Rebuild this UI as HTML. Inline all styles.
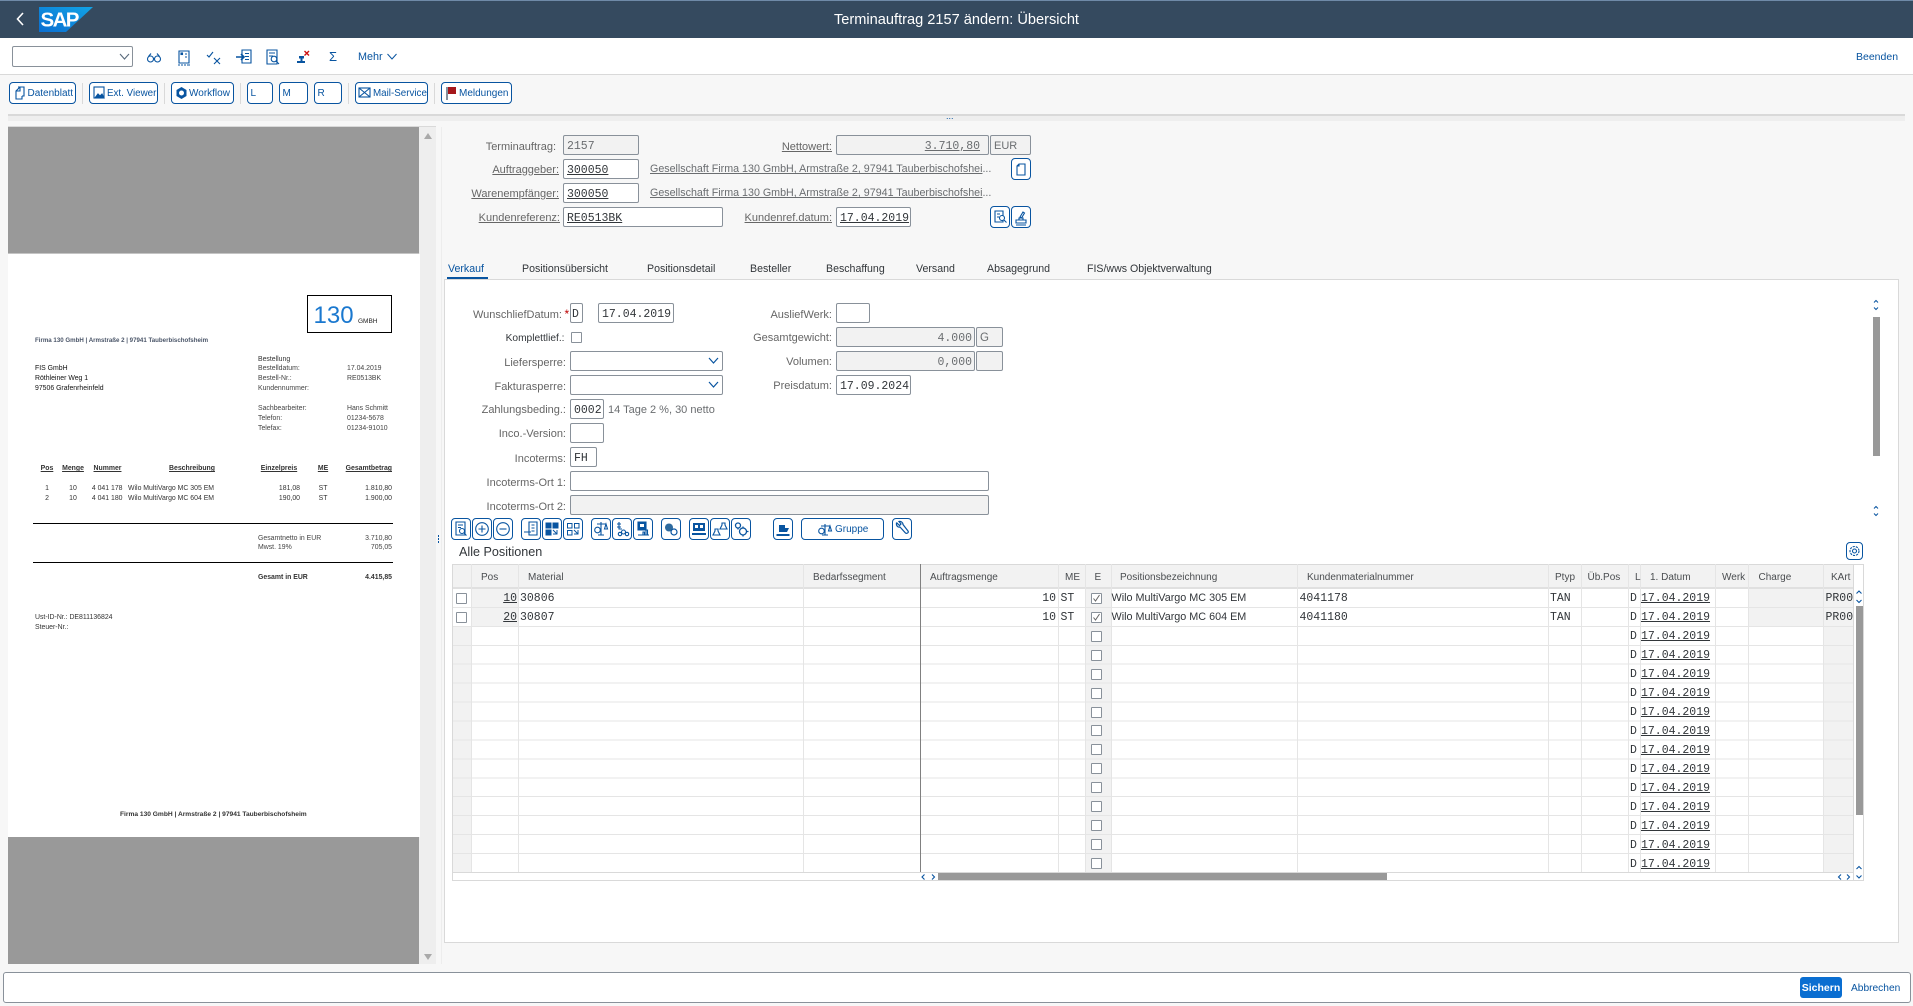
<!DOCTYPE html>
<html lang="de"><head><meta charset="utf-8"><title>Terminauftrag 2157 ändern: Übersicht</title>
<style>
html,body{margin:0;padding:0;width:1913px;height:1006px;overflow:hidden;background:#f7f7f7;font-family:"Liberation Sans",sans-serif;font-size:11px;color:#32363a}
div,span,svg{position:absolute;box-sizing:border-box}
u span,u{position:static}
.t{white-space:nowrap}
.b{border:1px solid #0854a0;border-radius:4px;background:#fff;height:22px;color:#0854a0;font-size:10px;line-height:22px;white-space:nowrap}
.s{width:1px;background:#d9d9d9;top:83px;height:21px}
.l{white-space:nowrap;text-align:right;color:#666;font-size:11px;line-height:23px;height:20px}
.l u{color:#666}
.i{border:1px solid #89919a;border-radius:2px;background:#fff;height:20px;font-family:"Liberation Mono",monospace;font-size:11.5px;line-height:21px;padding:0 2px 0 3px;color:#32363a;white-space:nowrap}
.g{background:#f2f2f2;color:#6a6d70}
.d{white-space:nowrap;font-size:6.9px;line-height:8px;color:#333;margin-top:1px}
.db{font-weight:bold}
.r{text-align:right}
.c{text-align:center}
.hd{white-space:nowrap;font-size:10px;line-height:27px;top:564px;color:#4a4d50}
.m{font-family:"Liberation Mono",monospace;font-size:11.5px;line-height:22px;white-space:nowrap;color:#32363a}
.v{width:1px;top:564px;height:308px;background:#e5e5e5}
.cb{width:11px;height:11px;border:1px solid #89919a;border-radius:1px;background:#fff}
svg{overflow:visible}
svg *{position:static}
.ic{fill:none;stroke:#0854a0;stroke-width:1.1}
.tab{white-space:nowrap;top:258.5px;line-height:20px;font-size:10.6px;color:#32363a}
</style></head><body>

<!-- Header -->
<div style="left:0;top:0;width:1913px;height:38px;background:#354a5f"></div>
<div style="left:0;top:0;width:1913px;height:1px;background:#6f8aa8"></div>
<svg style="left:0;top:0" width="100" height="38">
<polyline points="23,13 17.5,19 23,25" fill="none" stroke="#fff" stroke-width="1.6"/>
<defs><linearGradient id="sg" x1="0" y1="1" x2="1" y2="0"><stop offset="0" stop-color="#0a6ed1"/><stop offset="1" stop-color="#12a4e6"/></linearGradient></defs>
<polygon points="39,7 93,7 66,32 39,32" fill="url(#sg)"/>
<text x="40.5" y="26.5" font-family="Liberation Sans" font-weight="bold" font-size="20.5" letter-spacing="-1.6" fill="#fff">SAP</text>
</svg>
<div class="t" style="left:0;width:1913px;top:10px;line-height:20px;text-align:center;color:#fff;font-size:14.6px">Terminauftrag 2157 ändern: Übersicht</div>

<!-- Toolbar -->
<div style="left:0;top:38px;width:1913px;height:37px;background:#fff;border-bottom:1px solid #d9d9d9"></div>
<div style="left:12px;top:46px;width:121px;height:21px;border:1px solid #89919a;border-radius:2px;background:#fff"></div>
<svg style="left:118px;top:52px" width="14" height="10"><polyline points="2,2 6.5,7 11,2" fill="none" stroke="#5a6b7c" stroke-width="1.1"/></svg>

<svg class="ic" style="left:145px;top:48px" width="18" height="18"><circle cx="5.5" cy="11" r="3"/><circle cx="12.5" cy="11" r="3"/><path d="M8.5 10.500h1M3.500 8.500L6 5.500M14.500 8.500L12 5.500"/></svg>
<svg class="ic" style="left:175px;top:48px" width="18" height="18"><path d="M4 3h10v12H4zM10 6h2M10 9h2M7 6v0"/><path d="M3 17h2M6 17h2M9 17h2M12 17h3"/><rect x="6" y="5" width="1.500" height="1.500" fill="#0854a0"/></svg>
<svg class="ic" style="left:205px;top:48px" width="18" height="18" stroke-width="1.4"><path d="M2 7l2 2 4-5M9 10l6 6M15 10l-6 6"/></svg>
<svg class="ic" style="left:235px;top:48px" width="18" height="18"><path d="M7 2h9v13H7zM10 5.500h4M10 8.500h4M10 11.500h4" /><path d="M1 9h8M6 6l3 3-3 3" stroke-width="1.600"/></svg>
<svg class="ic" style="left:264px;top:48px" width="18" height="18"><path d="M3 2h10v14H3zM5 5h6M5 8h4"/><circle cx="10" cy="11" r="2.800"/><path d="M12 13l3 3"/></svg>
<svg style="left:294px;top:48px" width="20" height="18"><path d="M3 15h8v-2H8.500v-2.500H10V8H5v2.500h1.500V13H3z" fill="#0854a0"/><path d="M10.500 3l4.500 4.500M15 3l-4.500 4.500" stroke="#c11" stroke-width="1.400" fill="none"/></svg>
<div class="t" style="left:329px;top:48px;line-height:18px;color:#0854a0;font-size:13px">Σ</div>
<div class="t" style="left:358px;top:47px;line-height:20px;color:#0854a0;font-size:10.8px">Mehr</div>
<svg style="left:386px;top:52px" width="12" height="10"><polyline points="1.500,2 6,7 10.500,2" fill="none" stroke="#0854a0" stroke-width="1"/></svg>
<div class="t" style="left:1856px;top:46.500px;line-height:20px;color:#0854a0;font-size:10.5px">Beenden</div>

<!-- Button bar -->
<div class="b" style="left:9px;top:82px;width:67px;padding-left:17.500px">Datenblatt
<svg class="ic" style="left:3px;top:2px" width="13" height="16" stroke-width="1.300"><path d="M5 2h6v9H9M7 2L3 6v8h6v-3M3 6h4V2"/></svg></div>
<div class="s" style="left:82px"></div>
<div class="b" style="left:89px;top:82px;width:69px;padding-left:17px;font-size:9.800px">Ext. Viewer
<svg class="ic" style="left:3px;top:3px" width="13" height="14"><rect x="1" y="1" width="10" height="11"/><path d="M2 12l3-4 2 2 2-2 2 4z" fill="#0854a0"/></svg></div>
<div class="s" style="left:164px"></div>
<div class="b" style="left:171px;top:82px;width:63px;padding-left:17px">Workflow
<svg style="left:3px;top:3px" width="13" height="14"><path d="M6.500 1l5 3v6l-5 3-5-3V4z" fill="#0854a0"/><circle cx="6.500" cy="7" r="2.500" fill="#fff"/></svg></div>
<div class="s" style="left:240px"></div>
<div class="b" style="left:247px;top:82px;width:26px;padding-left:2.500px">L</div>
<div class="b" style="left:279px;top:82px;width:29px;padding-left:2.500px">M</div>
<div class="b" style="left:314px;top:82px;width:28px;padding-left:2.500px">R</div>
<div class="s" style="left:348px"></div>
<div class="b" style="left:355px;top:82px;width:73px;padding-left:17px;font-size:9.800px">Mail-Service
<svg class="ic" style="left:2px;top:4px" width="14" height="12"><rect x="1" y="1" width="11" height="9"/><path d="M1 1l11 9M12 1L1 10"/></svg></div>
<div class="s" style="left:434px"></div>
<div class="b" style="left:441px;top:82px;width:71px;padding-left:17px">Meldungen
<svg style="left:3px;top:3px" width="12" height="16"><path d="M2 1v13" stroke="#5a6b7c" stroke-width="1.500"/><rect x="3" y="1" width="8" height="7" fill="#a5171b"/></svg></div>

<!-- Splitter -->
<div style="left:8px;top:114px;width:1897px;height:2px;background:#d9d9d9"></div>
<div style="left:8px;top:116px;width:1897px;height:5px;background:#eeeeee"></div>
<div class="t" style="left:946px;top:112px;line-height:8px;font-size:9px;color:#0854a0;letter-spacing:0">...</div>

<!-- Left document pane -->
<div style="left:8px;top:126px;width:428px;height:838px;background:#eeeeee;border-top:1px solid #d9d9d9"></div>
<div style="left:8px;top:127px;width:411px;height:127px;background:#999;border-bottom:1px solid #c4c4c4"></div>
<div style="left:8px;top:254px;width:412px;height:583px;background:#fff"></div>
<div style="left:8px;top:837px;width:411px;height:127px;background:#999"></div>
<svg style="left:422px;top:131px" width="14" height="10"><polygon points="2,8 6,2 10,8" fill="#a9a9a9"/></svg>
<svg style="left:422px;top:952px" width="14" height="10"><polygon points="2,2 6,8 10,2" fill="#a9a9a9"/></svg>

<div style="left:307px;top:295px;width:85px;height:38px;border:1.500px solid #000"></div>
<div class="t" style="left:313.500px;top:304px;line-height:24px;font-size:24px;color:#1a78cf">130</div>
<div class="d" style="left:358px;top:317px;color:#222;font-size:6.500px">GMBH</div>
<div class="d db" style="left:35px;top:336px;color:#4a5568;font-size:6.150px">Firma 130 GmbH | Armstraße 2 | 97941 Tauberbischofsheim</div>
<div class="d" style="left:35px;top:364px;color:#111">FIS GmbH</div>
<div class="d" style="left:35px;top:374px;color:#111">Röthleiner Weg 1</div>
<div class="d" style="left:35px;top:384px;color:#111">97506 Grafenrheinfeld</div>
<div class="d" style="left:258px;top:355px">Bestellung</div>
<div class="d" style="left:258px;top:364px;color:#444">Bestelldatum:</div>
<div class="d" style="left:258px;top:374px;color:#444">Bestell-Nr.:</div>
<div class="d" style="left:258px;top:384px;color:#444">Kundennummer:</div>
<div class="d" style="left:258px;top:404px;color:#444">Sachbearbeiter:</div>
<div class="d" style="left:258px;top:414px;color:#444">Telefon:</div>
<div class="d" style="left:258px;top:424px;color:#444">Telefax:</div>
<div class="d" style="left:347px;top:364px;color:#444">17.04.2019</div>
<div class="d" style="left:347px;top:374px;color:#444">RE0513BK</div>
<div class="d" style="left:347px;top:404px;color:#444">Hans Schmitt</div>
<div class="d" style="left:347px;top:414px;color:#444">01234-5678</div>
<div class="d" style="left:347px;top:424px;color:#444">01234-91010</div>

<div class="d db c" style="left:27px;width:40px;top:464px"><u>Pos</u></div>
<div class="d db c" style="left:53px;width:40px;top:464px"><u>Menge</u></div>
<div class="d db c" style="left:87px;width:41px;top:464px"><u>Nummer</u></div>
<div class="d db c" style="left:152px;width:80px;top:464px"><u>Beschreibung</u></div>
<div class="d db c" style="left:249px;width:60px;top:464px"><u>Einzelpreis</u></div>
<div class="d db c" style="left:303px;width:40px;top:464px"><u>ME</u></div>
<div class="d db r" style="left:332px;width:60px;top:464px"><u>Gesamtbetrag</u></div>

<div class="d c" style="left:27px;width:40px;top:484px">1</div>
<div class="d c" style="left:53px;width:40px;top:484px">10</div>
<div class="d r" style="left:82px;width:40.500px;top:484px">4 041 178</div>
<div class="d" style="left:128px;top:484px">Wilo MultiVargo MC 305 EM</div>
<div class="d r" style="left:250px;width:50px;top:484px">181,08</div>
<div class="d c" style="left:303px;width:40px;top:484px">ST</div>
<div class="d r" style="left:332px;width:60px;top:484px">1.810,80</div>
<div class="d c" style="left:27px;width:40px;top:494px">2</div>
<div class="d c" style="left:53px;width:40px;top:494px">10</div>
<div class="d r" style="left:82px;width:40.500px;top:494px">4 041 180</div>
<div class="d" style="left:128px;top:494px">Wilo MultiVargo MC 604 EM</div>
<div class="d r" style="left:250px;width:50px;top:494px">190,00</div>
<div class="d c" style="left:303px;width:40px;top:494px">ST</div>
<div class="d r" style="left:332px;width:60px;top:494px">1.900,00</div>

<div style="left:33px;top:523px;width:360px;height:1px;background:#000"></div>
<div class="d" style="left:258px;top:534px;color:#444">Gesamtnetto in EUR</div>
<div class="d r" style="left:332px;width:60px;top:534px;color:#444">3.710,80</div>
<div class="d" style="left:258px;top:543px;color:#444">Mwst. 19%</div>
<div class="d r" style="left:332px;width:60px;top:543px;color:#444">705,05</div>
<div style="left:33px;top:562px;width:360px;height:1px;background:#000"></div>
<div class="d db" style="left:258px;top:573px">Gesamt in EUR</div>
<div class="d db r" style="left:332px;width:60px;top:573px">4.415,85</div>
<div class="d" style="left:35px;top:613px;color:#333">Ust-ID-Nr.: DE811136824</div>
<div class="d" style="left:35px;top:623px;color:#333">Steuer-Nr.:</div>
<div class="d db" style="left:120px;top:810px;color:#333;font-size:6.640px">Firma 130 GmbH | Armstraße 2 | 97941 Tauberbischofsheim</div>

<!-- Splitter dots -->
<div style="left:438px;top:535px;width:1px;height:2px;background:#0854a0"></div>
<div style="left:438px;top:538px;width:1px;height:2px;background:#0854a0"></div>
<div style="left:438px;top:541px;width:1px;height:2px;background:#0854a0"></div>
<div style="left:441px;top:127px;width:1px;height:837px;background:#ededed"></div>

<!-- Header form -->
<div class="l" style="left:440px;width:116px;top:135px;line-height:24px">Terminauftrag:</div>
<div class="i g" style="left:563px;width:76px;top:135px;line-height:22px">2157</div>
<div class="l" style="left:740px;width:92px;top:135px;line-height:24px"><u>Nettowert:</u></div>
<div class="i g r" style="left:836px;width:153px;top:135px;padding-right:8px;line-height:22px"><u>3.710,80</u></div>
<div class="i g" style="left:990px;width:41px;top:135px;font-family:'Liberation Sans',sans-serif;font-size:11px">EUR</div>

<div class="l" style="left:440px;width:119px;top:159px"><u>Auftraggeber:</u></div>
<div class="i" style="left:563px;width:76px;top:159px"><u>300050</u></div>
<div class="t" style="left:650px;top:159px;line-height:21px;color:#6a6d70;font-size:10.7px"><u>Gesellschaft Firma 130 GmbH, Armstraße 2, 97941 Tauberbischofshei</u>...</div>
<div class="b" style="left:1011px;top:158px;width:20px"><svg class="ic" style="left:0;top:0" width="18" height="20" stroke-width="1.300"><path d="M7 5h6v11H5V7zM7 5v2H5"/></svg></div>

<div class="l" style="left:440px;width:119px;top:183px"><u>Warenempfänger:</u></div>
<div class="i" style="left:563px;width:76px;top:183px"><u>300050</u></div>
<div class="t" style="left:650px;top:183px;line-height:21px;color:#6a6d70;font-size:10.7px"><u>Gesellschaft Firma 130 GmbH, Armstraße 2, 97941 Tauberbischofshei</u>...</div>

<div class="l" style="left:440px;width:120px;top:207px"><u>Kundenreferenz:</u></div>
<div class="i" style="left:563px;width:160px;top:207px"><u>RE0513BK</u></div>
<div class="l" style="left:720px;width:112px;top:207px"><u>Kundenref.datum:</u></div>
<div class="i" style="left:836px;width:75px;top:207px"><u>17.04.2019</u></div>
<div class="b" style="left:990px;top:206px;width:20px"><svg class="ic" style="left:0;top:0" width="18" height="20"><path d="M4 4h8v11H4zM6 7h3M6 10h2"/><circle cx="11" cy="11" r="2.500" fill="#fff"/><path d="M13 13l2.500 2.500"/></svg></div>
<div class="b" style="left:1011px;top:206px;width:20px"><svg class="ic" style="left:0;top:0" width="18" height="20"><path d="M4 13h10v3H4zM7 13v-2h4v2M8 10l3-5 1.500 1-3 5zM4 18h10"/></svg></div>

<!-- Tabs -->
<div style="left:444px;top:279px;width:1455px;height:664px;background:#fff;border:1px solid #d9d9d9"></div>
<div class="tab" style="left:448px;color:#0854a0">Verkauf</div>
<div style="left:447px;top:277px;width:41px;height:2px;background:#0854a0"></div>
<div class="tab" style="left:522px">Positionsübersicht</div>
<div class="tab" style="left:647px">Positionsdetail</div>
<div class="tab" style="left:750px">Besteller</div>
<div class="tab" style="left:826px">Beschaffung</div>
<div class="tab" style="left:916px">Versand</div>
<div class="tab" style="left:987px">Absagegrund</div>
<div class="tab" style="left:1087px">FIS/wws Objektverwaltung</div>

<!-- Verkauf form -->
<div class="l" style="left:450px;width:112px;top:303px;line-height:24px">WunschliefDatum:</div>
<div class="t" style="left:564.500px;top:304px;line-height:20px;color:#b00;font-size:12px">*</div>
<div class="i" style="left:570px;width:13px;top:303px;padding:0 1px">D</div>
<div class="i" style="left:598px;width:76px;top:303px">17.04.2019</div>
<div class="l" style="left:720px;width:112px;top:303px;line-height:24px">AusliefWerk:</div>
<div class="i" style="left:836px;width:34px;top:303px"></div>

<div class="l" style="left:450px;width:114.500px;top:327px;color:#32363a;font-size:10.200px">Komplettlief.:</div>
<div class="cb" style="left:571px;top:332px;width:11px;height:11px"></div>
<div class="l" style="left:720px;width:112px;top:327px">Gesamtgewicht:</div>
<div class="i g r" style="left:836px;width:139px;top:327px">4.000</div>
<div class="i g" style="left:976px;width:27px;top:327px;font-family:'Liberation Sans',sans-serif">G</div>

<div class="l" style="left:450px;width:116px;top:351px;line-height:24px">Liefersperre:</div>
<div class="i" style="left:570px;width:153px;top:351px"></div>
<svg style="left:707px;top:356px" width="14" height="10"><polyline points="2,2 6.500,7 11,2" fill="none" stroke="#0854a0" stroke-width="1.200"/></svg>
<div class="l" style="left:720px;width:112px;top:351px">Volumen:</div>
<div class="i g r" style="left:836px;width:139px;top:351px">0,000</div>
<div class="i g" style="left:976px;width:27px;top:351px"></div>

<div class="l" style="left:450px;width:116px;top:375px;line-height:24px">Fakturasperre:</div>
<div class="i" style="left:570px;width:153px;top:375px"></div>
<svg style="left:707px;top:380px" width="14" height="10"><polyline points="2,2 6.500,7 11,2" fill="none" stroke="#0854a0" stroke-width="1.200"/></svg>
<div class="l" style="left:720px;width:112px;top:375px">Preisdatum:</div>
<div class="i" style="left:836px;width:75px;top:375px">17.09.2024</div>

<div class="l" style="left:450px;width:116px;top:399px">Zahlungsbeding.:</div>
<div class="i" style="left:570px;width:34px;top:399px">0002</div>
<div class="t" style="left:608px;top:399px;line-height:23px;color:#6a6d70;font-size:11px">14 Tage 2 %, 30 netto</div>
<div class="l" style="left:450px;width:116px;top:423px">Inco.-Version:</div>
<div class="i" style="left:570px;width:34px;top:423px"></div>
<div class="l" style="left:450px;width:116px;top:447px;line-height:24px">Incoterms:</div>
<div class="i" style="left:570px;width:27px;top:447px">FH</div>
<div class="l" style="left:450px;width:116px;top:471px;line-height:24px">Incoterms-Ort 1:</div>
<div class="i" style="left:570px;width:419px;top:471px"></div>
<div class="l" style="left:450px;width:116px;top:495px;line-height:24px">Incoterms-Ort 2:</div>
<div class="i g" style="left:570px;width:419px;top:495px"></div>

<!-- Inner scroll -->
<svg style="left:1871px;top:298px" width="10" height="16" fill="none" stroke="#0854a0" stroke-width="1"><path d="M3 4.500L5 2.500 7 4.500M3 9.500L5 11.500 7 9.500"/></svg>
<div style="left:1873px;top:317px;width:7px;height:139px;background:#999"></div>
<svg style="left:1871px;top:504px" width="10" height="16" fill="none" stroke="#0854a0" stroke-width="1"><path d="M3 4.500L5 2.500 7 4.500M3 9.500L5 11.500 7 9.500"/></svg>

<!-- Item toolbar -->
<div class="b" style="left:451px;top:518px;width:20px"><svg class="ic" style="left:0;top:0" width="18" height="20"><path d="M4 3h9v13H4zM6 6h5M6 8.500h3"/><circle cx="10" cy="12" r="2.500" fill="#fff"/><path d="M12 14l2.500 2.500"/></svg></div>
<div class="b" style="left:472px;top:518px;width:20px"><svg class="ic" style="left:0;top:0" width="18" height="20"><circle cx="9" cy="10" r="6.300"/><path d="M5.500 10h7M9 6.500v7"/></svg></div>
<div class="b" style="left:493px;top:518px;width:20px"><svg class="ic" style="left:0;top:0" width="18" height="20"><circle cx="9" cy="10" r="6.300"/><path d="M5.500 10h7"/></svg></div>
<div class="b" style="left:521px;top:518px;width:20px"><svg class="ic" style="left:0;top:0" width="18" height="20"><path d="M7 3h8v13H7zM9.500 6h3M9.500 9h3M9.500 12h3M2 13h7"/></svg></div>
<div class="b" style="left:542px;top:518px;width:20px"><svg class="ic" style="left:0;top:0;stroke-width:1" width="18" height="20"><rect x="3" y="4" width="5" height="5" fill="#0854a0"/><rect x="10" y="4" width="5" height="5" fill="#0854a0"/><rect x="3" y="11" width="5" height="5" fill="#0854a0"/><path d="M10 11l4 4M14 11v4h-4"/></svg></div>
<div class="b" style="left:563px;top:518px;width:20px"><svg class="ic" style="left:0;top:0;stroke-width:1" width="18" height="20"><rect x="3.500" y="4.500" width="4.500" height="4.500"/><rect x="10.500" y="4.500" width="4.500" height="4.500"/><rect x="3.500" y="11.500" width="4.500" height="4.500"/><path d="M10 11l4 4M14 11v4h-4"/></svg></div>
<div class="b" style="left:591px;top:518px;width:20px"><svg class="ic" style="left:0;top:0" width="18" height="20"><path d="M9 3v13M5 5h9M14 5l-1.500 5h3zM6 16h6" /><circle cx="5.500" cy="11" r="2.800"/></svg></div>
<div class="b" style="left:612px;top:518px;width:20px"><svg class="ic" style="left:0;top:0" width="18" height="20"><path d="M6 3v7h3M4 5h4M4 8h4"/><circle cx="10.500" cy="13" r="2"/><circle cx="14" cy="15" r="1.700"/><circle cx="7" cy="15" r="1.700"/></svg></div>
<div class="b" style="left:633px;top:518px;width:20px"><svg class="ic" style="left:0;top:0" width="18" height="20"><path d="M4 3h8v8H4z" fill="#0854a0"/><path d="M6 5h4v3H6z" fill="#fff" stroke="none"/><path d="M4 16h11M9 16v-3h1.500v3M12 16v-5h1.500v5"/></svg></div>
<div class="b" style="left:661px;top:518px;width:20px"><svg style="left:0;top:0" width="18" height="20"><circle cx="7" cy="8.500" r="4" fill="#2e6a9e"/><circle cx="12" cy="13" r="3" fill="none" stroke="#0854a0" stroke-width="1.200"/></svg></div>
<div class="b" style="left:689px;top:518px;width:20px"><svg style="left:0;top:0" width="18" height="20"><rect x="3" y="4" width="12" height="8" fill="#0854a0"/><rect x="5" y="6" width="3" height="3" fill="#fff"/><rect x="10" y="6" width="3" height="3" fill="#fff"/><path d="M2 15h14" stroke="#0854a0" stroke-width="2"/></svg></div>
<div class="b" style="left:710px;top:518px;width:20px"><svg class="ic" style="left:0;top:0" width="18" height="20"><path d="M4 10h3v2l2 4H2l2-4zM11 4h3v2l2 4H9l2-4z"/></svg></div>
<div class="b" style="left:731px;top:518px;width:20px"><svg class="ic" style="left:0;top:0;stroke-width:1.300" width="18" height="20"><circle cx="6" cy="6.500" r="2.500"/><circle cx="11" cy="12.500" r="3.500"/><path d="M11 7.500v1.500M11 16v1.500M6 9v1.500M15 12.500h1.500"/></svg></div>
<div class="b" style="left:773px;top:518px;width:20px"><svg style="left:0;top:0" width="18" height="20"><path d="M5 6h6v3h4l-2 4H5z" fill="#0854a0"/><path d="M2.500 16h13" stroke="#0854a0" stroke-width="2"/></svg></div>
<div class="b" style="left:801px;top:518px;width:83px;padding-left:33px;font-size:10px;line-height:22px">Gruppe
<svg class="ic" style="left:14px;top:1px" width="18" height="20"><path d="M9 4v11M5 6h9M14 6l-1.500 5h3zM6 15h6"/><circle cx="5.500" cy="11" r="2.800"/></svg></div>
<div class="b" style="left:892px;top:518px;width:20px"><svg class="ic" style="left:0;top:0;stroke-width:1.200" width="18" height="20"><path d="M4 4l2.500 2.500 1.500-1.500-2-2.500c2-.5 4 1 4 3l5 6.500c1 1.500-1 3-2.500 2l-5.500-6c-2 .5-4-1-3.500-4z"/></svg></div>

<div class="t" style="left:459px;top:542px;line-height:20px;font-size:12.600px;color:#32363a">Alle Positionen</div>
<div class="b" style="left:1846px;top:542px;width:17px;height:18px"><svg class="ic" style="left:0;top:0" width="15" height="16" stroke-width="1.100"><circle cx="7.500" cy="8" r="2"/><circle cx="7.500" cy="8" r="4.500" stroke-dasharray="2.200 1"/></svg></div>

<!-- Table -->
<div style="left:452px;top:564px;width:1412px;height:317px;background:#fff;border:1px solid #d9d9d9"></div>
<div style="left:453px;top:565px;width:1400px;height:23px;background:#f2f2f2"></div>
<div style="left:453px;top:626px;width:19px;height:246px;background:#f2f2f2"></div>
<div style="left:472px;top:588px;width:47px;height:38px;background:#f2f2f2"></div>
<div style="left:1085px;top:588px;width:26px;height:284px;background:#f2f2f2"></div>
<div style="left:1749px;top:588px;width:75px;height:38px;background:#f2f2f2"></div>
<div style="left:1824px;top:588px;width:29px;height:284px;background:#f2f2f2"></div>
<div style="left:453px;top:587px;width:1400px;height:2px;background:#e0e0e0"></div>
<div style="left:453px;top:589px;width:1400px;height:284px;background:repeating-linear-gradient(to bottom,transparent 0,transparent 17.930px,#e5e5e5 17.930px,#e5e5e5 18.930px)"></div>
<div class="v" style="left:471px"></div><div class="v" style="left:518px"></div><div class="v" style="left:803px"></div>
<div class="v" style="left:920px;background:#808080"></div>
<div class="v" style="left:1058px"></div><div class="v" style="left:1085px"></div><div class="v" style="left:1111px"></div><div class="v" style="left:1297px"></div>
<div class="v" style="left:1548px"></div><div class="v" style="left:1581px"></div><div class="v" style="left:1628px"></div><div class="v" style="left:1640px"></div>
<div class="v" style="left:1715px"></div><div class="v" style="left:1748px"></div><div class="v" style="left:1823px"></div><div class="v" style="left:1853px;height:317px;background:#d9d9d9"></div>
<div style="left:453px;top:872px;width:1400px;height:1px;background:#d9d9d9"></div>

<div class="hd" style="left:481px">Pos</div><div class="hd" style="left:528px">Material</div><div class="hd" style="left:813px">Bedarfssegment</div>
<div class="hd" style="left:930px">Auftragsmenge</div><div class="hd" style="left:1065px">ME</div><div class="hd" style="left:1094.500px">E</div>
<div class="hd" style="left:1120px">Positionsbezeichnung</div><div class="hd" style="left:1307px">Kundenmaterialnummer</div>
<div class="hd" style="left:1555px">Ptyp</div><div class="hd" style="left:1587.500px">Üb.Pos</div><div class="hd" style="left:1635px">L</div>
<div class="hd" style="left:1650px">1. Datum</div><div class="hd" style="left:1722px">Werk</div><div class="hd" style="left:1758.500px">Charge</div><div class="hd" style="left:1831px">KArt</div>

<!-- Row data -->
<div class="cb" style="left:456px;top:592.500px"></div>
<div class="cb" style="left:456px;top:611.500px"></div>
<div class="m r" style="left:472px;width:45px;top:588px"><u>10</u></div>
<div class="m r" style="left:472px;width:45px;top:607px"><u>20</u></div>
<div class="m" style="left:520px;top:588px">30806</div>
<div class="m" style="left:520px;top:607px">30807</div>
<div class="m r" style="left:1000px;width:56px;top:588px">10</div>
<div class="m r" style="left:1000px;width:56px;top:607px">10</div>
<div class="m" style="left:1060.500px;top:588px">ST</div>
<div class="m" style="left:1060.500px;top:607px">ST</div>
<div class="t" style="left:1111.500px;top:588px;line-height:21px;font-size:10.800px">Wilo MultiVargo MC 305 EM</div>
<div class="t" style="left:1111.500px;top:607px;line-height:21px;font-size:10.800px">Wilo MultiVargo MC 604 EM</div>
<div class="m" style="left:1299.500px;top:588px">4041178</div>
<div class="m" style="left:1299.500px;top:607px">4041180</div>
<div class="m" style="left:1550px;top:588px">TAN</div>
<div class="m" style="left:1550px;top:607px">TAN</div>
<div class="m" style="left:1825.500px;top:588px">PR00</div>
<div class="m" style="left:1825.500px;top:607px">PR00</div>

<div class="cb" style="left:1091px;top:592.500px"><svg style="left:0;top:0" width="9" height="9"><path d="M1.500 4.500l2 2.500 4-6" fill="none" stroke="#666" stroke-width="1"/></svg></div>
<div class="cb" style="left:1091px;top:611.500px"><svg style="left:0;top:0" width="9" height="9"><path d="M1.500 4.500l2 2.500 4-6" fill="none" stroke="#666" stroke-width="1"/></svg></div>
<div class="cb" style="left:1091px;top:630.500px"></div>
<div class="cb" style="left:1091px;top:649.500px"></div>
<div class="cb" style="left:1091px;top:668.500px"></div>
<div class="cb" style="left:1091px;top:687.500px"></div>
<div class="cb" style="left:1091px;top:706.500px"></div>
<div class="cb" style="left:1091px;top:725px"></div>
<div class="cb" style="left:1091px;top:744px"></div>
<div class="cb" style="left:1091px;top:763px"></div>
<div class="cb" style="left:1091px;top:782px"></div>
<div class="cb" style="left:1091px;top:801px"></div>
<div class="cb" style="left:1091px;top:820px"></div>
<div class="cb" style="left:1091px;top:839px"></div>
<div class="cb" style="left:1091px;top:858px"></div>

<div class="m" style="left:1630px;top:588px">D</div><div class="m" style="left:1641px;top:588px"><u>17.04.2019</u></div>
<div class="m" style="left:1630px;top:607px">D</div><div class="m" style="left:1641px;top:607px"><u>17.04.2019</u></div>
<div class="m" style="left:1630px;top:626px">D</div><div class="m" style="left:1641px;top:626px"><u>17.04.2019</u></div>
<div class="m" style="left:1630px;top:645px">D</div><div class="m" style="left:1641px;top:645px"><u>17.04.2019</u></div>
<div class="m" style="left:1630px;top:664px">D</div><div class="m" style="left:1641px;top:664px"><u>17.04.2019</u></div>
<div class="m" style="left:1630px;top:683px">D</div><div class="m" style="left:1641px;top:683px"><u>17.04.2019</u></div>
<div class="m" style="left:1630px;top:702px">D</div><div class="m" style="left:1641px;top:702px"><u>17.04.2019</u></div>
<div class="m" style="left:1630px;top:721px">D</div><div class="m" style="left:1641px;top:721px"><u>17.04.2019</u></div>
<div class="m" style="left:1630px;top:740px">D</div><div class="m" style="left:1641px;top:740px"><u>17.04.2019</u></div>
<div class="m" style="left:1630px;top:759px">D</div><div class="m" style="left:1641px;top:759px"><u>17.04.2019</u></div>
<div class="m" style="left:1630px;top:778px">D</div><div class="m" style="left:1641px;top:778px"><u>17.04.2019</u></div>
<div class="m" style="left:1630px;top:797px">D</div><div class="m" style="left:1641px;top:797px"><u>17.04.2019</u></div>
<div class="m" style="left:1630px;top:816px">D</div><div class="m" style="left:1641px;top:816px"><u>17.04.2019</u></div>
<div class="m" style="left:1630px;top:835px">D</div><div class="m" style="left:1641px;top:835px"><u>17.04.2019</u></div>
<div class="m" style="left:1630px;top:854px">D</div><div class="m" style="left:1641px;top:854px"><u>17.04.2019</u></div>

<!-- Table scrollers -->
<svg style="left:1854px;top:588px" width="10" height="18" fill="none" stroke="#0854a0" stroke-width="1.100"><path d="M2.500 5.500L5 3 7.500 5.500M2.500 12L5 14.500 7.500 12"/></svg>
<div style="left:1856px;top:606px;width:7px;height:209px;background:#999"></div>
<svg style="left:1854px;top:862px" width="10" height="18" fill="none" stroke="#0854a0" stroke-width="1.100"><path d="M2.500 7L5 4.500 7.500 7M2.500 13.500L5 16 7.500 13.500"/></svg>
<svg style="left:920px;top:873px" width="18" height="8" fill="none" stroke="#0854a0" stroke-width="1.100"><path d="M4.500 1.500L2 4l2.500 2.500M12 1.500L14.500 4 12 6.500"/></svg>
<div style="left:938px;top:873px;width:449px;height:7px;background:#999"></div>
<svg style="left:1836px;top:873px" width="18" height="8" fill="none" stroke="#0854a0" stroke-width="1.100"><path d="M5 1.500L2.500 4 5 6.500M11 1.500L13.500 4 11 6.500"/></svg>

<!-- Footer -->
<div style="left:3px;top:972px;width:1908px;height:31px;background:#fff;border:1px solid #89919a;border-radius:3px"></div>
<div class="t c" style="left:1800px;top:977px;width:42px;height:21px;background:#0a6ed1;border-radius:3px;color:#fff;font-size:10.500px;line-height:23px;font-weight:bold">Sichern</div>
<div class="t" style="left:1851px;top:977px;line-height:23px;color:#0854a0;font-size:10.200px">Abbrechen</div>
</body></html>
